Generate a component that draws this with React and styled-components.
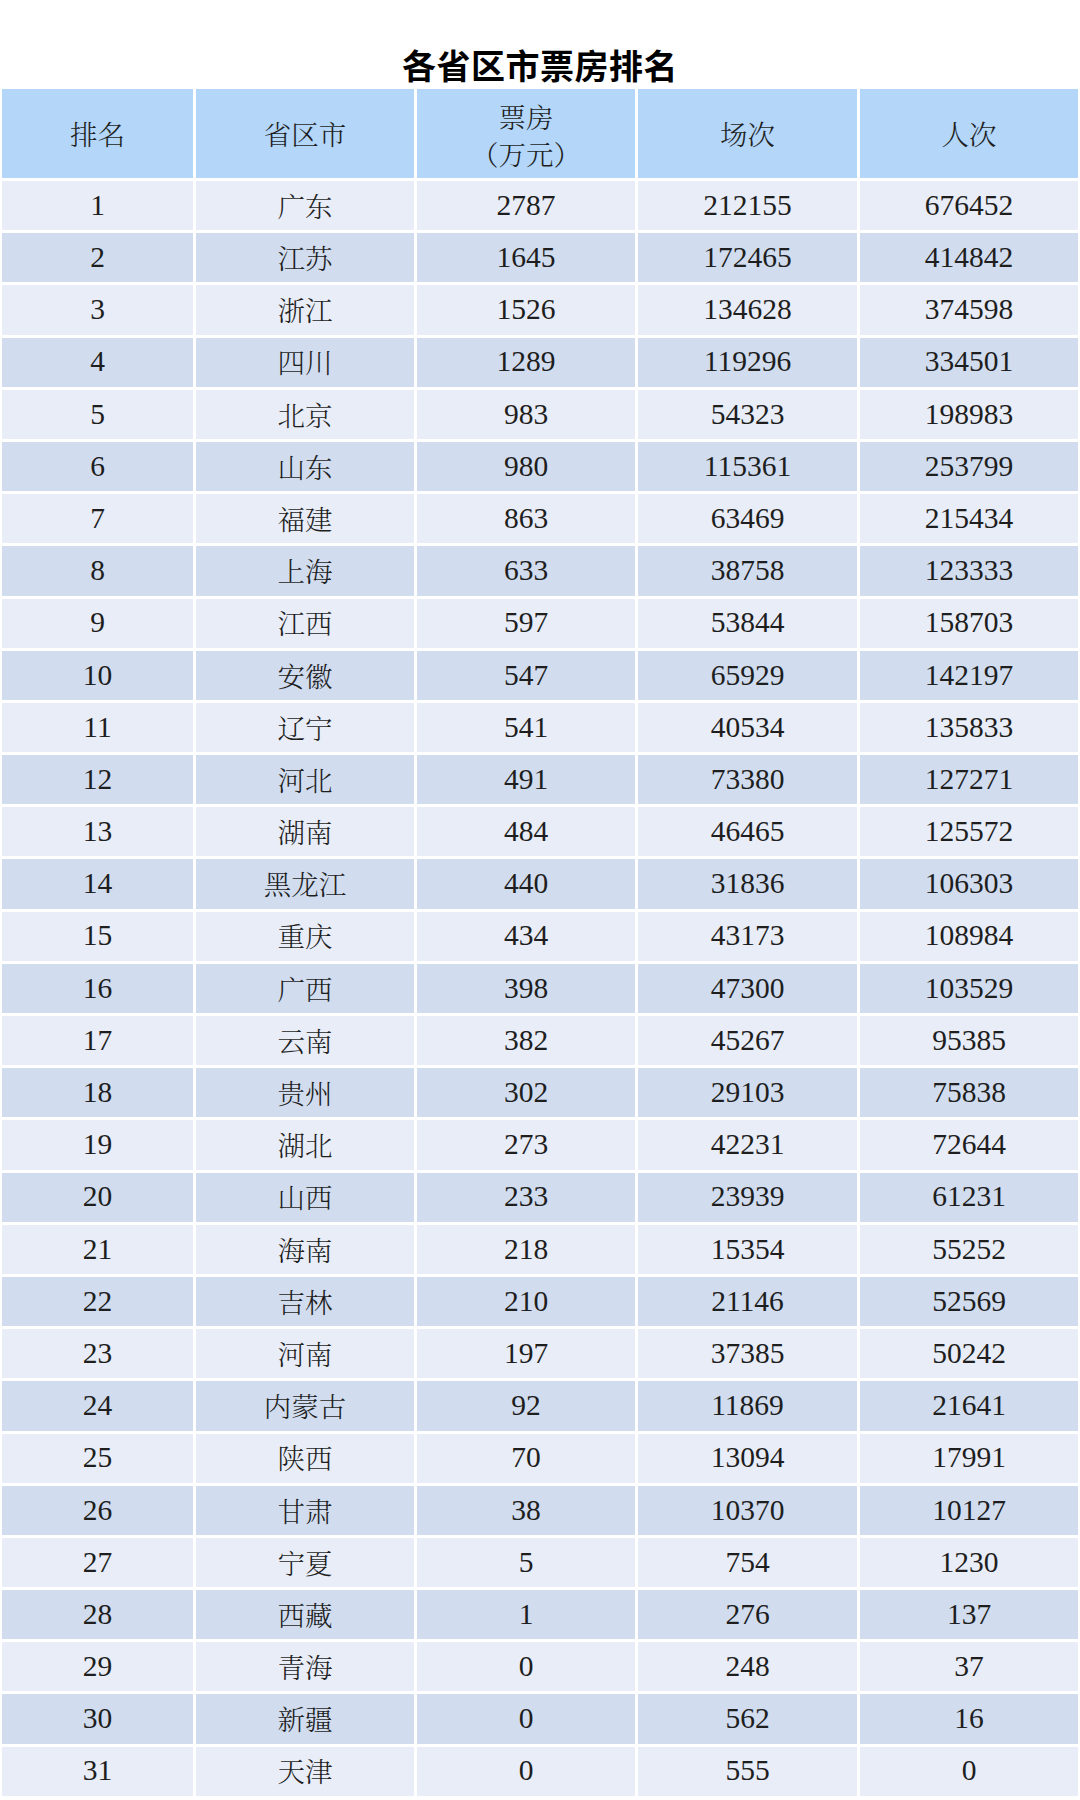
import React from "react";
import styled, { createGlobalStyle } from "styled-components";

const GlobalStyle = createGlobalStyle`
  html, body {
    margin: 0;
    padding: 0;
    background: #ffffff;
  }
  * { box-sizing: border-box; }
`;

const Page = styled.div`
  width: 1080px;
  padding: 0 2px;
  font-family: "Liberation Serif", "Noto Serif CJK SC", "Noto Sans CJK SC", serif;
  color: #1e1e1e;
`;

const Title = styled.h1`
  margin: 0;
  padding-top: 45px;
  height: 89px;
  line-height: 40px;
  text-align: center;
  font-family: "Noto Sans CJK SC", "Noto Sans", sans-serif;
  font-weight: 700;
  font-size: 34px;
  color: #000;
  letter-spacing: 0.5px;
`;

const Table = styled.div`
  display: flex;
  flex-direction: column;
  gap: 3px;
`;

const Row = styled.div`
  display: grid;
  grid-template-columns: 191px 218px 218px 219px 218px;
  column-gap: 3px;
  height: ${(p) => (p.$header ? "89px" : "49.2px")};
`;

const Cell = styled.div`
  display: flex;
  flex-direction: column;
  align-items: center;
  justify-content: center;
  text-align: center;
  background: ${(p) =>
    p.$header ? "#b3d6f9" : p.$odd ? "#e9edf7" : "#d1ddef"};
  font-size: ${(p) => (p.$header ? "27.5px" : p.$cjk ? "27.5px" : "29.5px")};
  line-height: ${(p) => (p.$header ? "39px" : "1")};
  font-family: ${(p) =>
    p.$cjk
      ? '"Noto Serif CJK SC", "Noto Sans CJK SC", serif'
      : '"Liberation Serif", "Noto Sans CJK SC", serif'};
  font-weight: ${(p) => (p.$cjk ? 300 : 400)};
  color: #1e1e1e;
`;

const HeaderLine = styled.span`
  display: block;
  line-height: 39px;
  height: 37px;
`;

const data = [
  ["广东", 2787, 212155, 676452],
  ["江苏", 1645, 172465, 414842],
  ["浙江", 1526, 134628, 374598],
  ["四川", 1289, 119296, 334501],
  ["北京", 983, 54323, 198983],
  ["山东", 980, 115361, 253799],
  ["福建", 863, 63469, 215434],
  ["上海", 633, 38758, 123333],
  ["江西", 597, 53844, 158703],
  ["安徽", 547, 65929, 142197],
  ["辽宁", 541, 40534, 135833],
  ["河北", 491, 73380, 127271],
  ["湖南", 484, 46465, 125572],
  ["黑龙江", 440, 31836, 106303],
  ["重庆", 434, 43173, 108984],
  ["广西", 398, 47300, 103529],
  ["云南", 382, 45267, 95385],
  ["贵州", 302, 29103, 75838],
  ["湖北", 273, 42231, 72644],
  ["山西", 233, 23939, 61231],
  ["海南", 218, 15354, 55252],
  ["吉林", 210, 21146, 52569],
  ["河南", 197, 37385, 50242],
  ["内蒙古", 92, 11869, 21641],
  ["陕西", 70, 13094, 17991],
  ["甘肃", 38, 10370, 10127],
  ["宁夏", 5, 754, 1230],
  ["西藏", 1, 276, 137],
  ["青海", 0, 248, 37],
  ["新疆", 0, 562, 16],
  ["天津", 0, 555, 0],
];

export default function App() {
  return (
    <Page>
      <GlobalStyle />
      <Title>各省区市票房排名</Title>
      <Table>
        <Row $header>
          <Cell $header $cjk>排名</Cell>
          <Cell $header $cjk>省区市</Cell>
          <Cell $header $cjk>
            <HeaderLine>票房</HeaderLine>
            <HeaderLine>（万元）</HeaderLine>
          </Cell>
          <Cell $header $cjk>场次</Cell>
          <Cell $header $cjk>人次</Cell>
        </Row>
        {data.map((r, i) => {
          const odd = i % 2 === 0;
          return (
            <Row key={r[0]}>
              <Cell $odd={odd}>{i + 1}</Cell>
              <Cell $odd={odd} $cjk>{r[0]}</Cell>
              <Cell $odd={odd}>{r[1]}</Cell>
              <Cell $odd={odd}>{r[2]}</Cell>
              <Cell $odd={odd}>{r[3]}</Cell>
            </Row>
          );
        })}
      </Table>
    </Page>
  );
}
